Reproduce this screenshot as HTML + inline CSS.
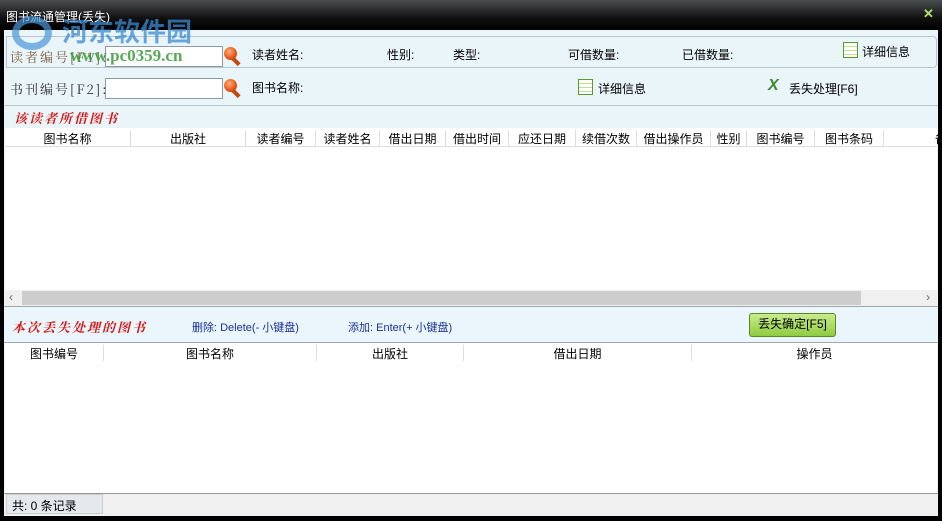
<!DOCTYPE html><html><head><meta charset="utf-8"><style>
*{margin:0;padding:0;box-sizing:border-box}
body{width:942px;height:521px;background:#000;font-family:"Liberation Sans","Noto Sans CJK SC",sans-serif;font-size:12px;color:#000;position:relative;overflow:hidden}
.a{position:absolute}
.title{left:0;top:0;width:942px;height:30px;background:linear-gradient(#4a4d50,#111 60%,#000)}
.inner{left:4px;top:30px;width:934px;height:486px;background:#eaf5fa}
.box{border:1px solid #b9c6cf}
.inp{background:#fff;border:1px solid #8a9aa6;height:21px;width:118px}
.mag{width:13px;height:13px;border-radius:50%;background:radial-gradient(circle at 40% 35%,#ffb070,#e2541a 60%,#a43008)}
.hdl{width:4px;height:9px;background:#c04a10;transform:rotate(-45deg)}
.red{color:#d41b1b;font-family:"Noto Serif CJK SC",serif;font-size:13px;letter-spacing:2px;font-weight:bold;font-style:italic}
.hdr{background:#fff;height:19px;border-bottom:1px solid #ddd}
.hdr span{position:absolute;top:2px;text-align:center;border-right:1px solid #ddd;height:16px}
.doc{width:15px;height:16px;border:1px solid #5a9a2a;background:repeating-linear-gradient(#fff 0 3px,#bfe29a 3px 4px)}
.blue{color:#1a2f9a;font-size:11px}
</style></head><body>
<div class="a title"></div>
<div class="a" style="left:6px;top:8px;color:#fff;font-size:12px">图书流通管理(丢失)</div>
<div class="a" style="left:923px;top:6px;color:#b8e070;font-weight:bold;font-size:13px">✕</div>
<div class="a inner"></div>
<div class="a box" style="left:6px;top:36px;width:931px;height:32px;border-radius:0 4px 4px 0;background:#eaf5fa"></div>
<div class="a" style="left:10px;top:47px;color:#7a5a3a;font-size:13px;letter-spacing:2px;font-family:'Noto Serif CJK SC',serif">读者编号[F1]:</div>
<div class="a inp" style="left:105px;top:46px"></div>
<div class="a" style="left:62px;top:12px;color:#3a8ad0;font-size:26px;font-weight:bold;opacity:.75;font-family:'Noto Sans CJK SC',sans-serif">河东软件园</div>
<div class="a" style="left:12px;top:16px;width:40px;height:34px;border-radius:50%;border:7px solid #4a95d8;opacity:.7"></div>
<div class="a" style="left:70px;top:46px;color:#3a9a3a;font-size:17px;font-weight:bold;font-family:'Liberation Serif',serif;opacity:.85">www.pc0359.cn</div>
<div class="a hdl" style="left:234px;top:57px"></div>
<div class="a mag" style="left:224px;top:47px"></div>
<div class="a" style="left:252px;top:46px">读者姓名:</div>
<div class="a" style="left:387px;top:46px">性别:</div>
<div class="a" style="left:453px;top:46px">类型:</div>
<div class="a" style="left:568px;top:46px">可借数量:</div>
<div class="a" style="left:682px;top:46px">已借数量:</div>
<div class="a doc" style="left:843px;top:42px"></div>
<div class="a" style="left:862px;top:43px">详细信息</div>
<div class="a" style="left:4px;top:105px;width:934px;height:1px;background:#b9c6cf"></div>
<div class="a" style="left:10px;top:79px;color:#333;font-size:13px;letter-spacing:2px;font-family:'Noto Serif CJK SC',serif">书刊编号[F2]:</div>
<div class="a inp" style="left:105px;top:78px"></div>
<div class="a hdl" style="left:234px;top:89px"></div>
<div class="a mag" style="left:224px;top:79px"></div>
<div class="a" style="left:252px;top:79px">图书名称:</div>
<div class="a doc" style="left:578px;top:79px"></div>
<div class="a" style="left:598px;top:80px">详细信息</div>
<div class="a" style="left:768px;top:77px;color:#3a8a2a;font-weight:bold;font-size:16px;font-style:italic">X</div>
<div class="a" style="left:789px;top:80px">丢失处理[F6]</div>
<div class="a red" style="left:14px;top:108px">该读者所借图书</div>
<div class="a" style="left:5px;top:128px;width:932px;height:162px;background:#fff"></div>
<div class="a hdr" style="left:5px;top:128px;width:932px">
<span style="left:0;width:126px">图书名称</span><span style="left:126px;width:115px">出版社</span><span style="left:241px;width:70px">读者编号</span><span style="left:311px;width:64px">读者姓名</span><span style="left:375px;width:66px">借出日期</span><span style="left:441px;width:63px">借出时间</span><span style="left:504px;width:67px">应还日期</span><span style="left:571px;width:61px">续借次数</span><span style="left:632px;width:74px">借出操作员</span><span style="left:706px;width:36px">性别</span><span style="left:742px;width:68px">图书编号</span><span style="left:810px;width:69px">图书条码</span><span style="left:926px;width:20px;border:0">备</span></div>
<div class="a" style="left:5px;top:290px;width:932px;height:16px;background:#f0f0f0"></div>
<div class="a" style="left:22px;top:291px;width:839px;height:14px;background:#cdcdcd"></div>
<div class="a" style="left:9px;top:290px;color:#666">‹</div>
<div class="a" style="left:926px;top:290px;color:#666">›</div>
<div class="a" style="left:4px;top:306px;width:934px;height:1px;background:#a0a8ae"></div>
<div class="a" style="left:4px;top:307px;width:934px;height:35px;background:#eaf6fb"></div>
<div class="a red" style="left:12px;top:317px">本次丢失处理的图书</div>
<div class="a blue" style="left:192px;top:319px">删除: Delete(- 小键盘)</div>
<div class="a blue" style="left:348px;top:319px">添加: Enter(+ 小键盘)</div>
<div class="a" style="left:749px;top:313px;width:87px;height:24px;border:1px solid #5c8a20;border-radius:3px;background:linear-gradient(#c9ec8e,#8fcc3e);text-align:center;line-height:21px">丢失确定[F5]</div>
<div class="a" style="left:4px;top:342px;width:934px;height:1px;background:#a0a8ae"></div>
<div class="a" style="left:5px;top:343px;width:932px;height:150px;background:#fff"></div>
<div class="a hdr" style="left:5px;top:343px;width:932px;border:0">
<span style="left:0;width:99px">图书编号</span><span style="left:99px;width:213px">图书名称</span><span style="left:312px;width:147px">出版社</span><span style="left:459px;width:228px">借出日期</span><span style="left:687px;width:245px;border:0">操作员</span></div>
<div class="a" style="left:4px;top:493px;width:934px;height:22px;background:#f0f0f0;border-top:1px solid #999"></div>
<div class="a" style="left:6px;top:494px;width:97px;height:20px;background:#e3e9ec;border:1px solid #ccc;padding:2px 0 0 5px">共: 0 条记录</div>
</body></html>
